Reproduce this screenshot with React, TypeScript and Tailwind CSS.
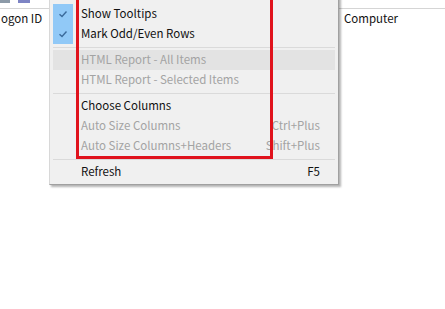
import React from "react";

type Item = {
  label: string;
  checked?: boolean;
  disabled?: boolean;
  active?: boolean;
  shortcut?: string;
};

const groups: Item[][] = [
  [
    { label: "Show Tooltips", checked: true },
    { label: "Mark Odd/Even Rows", checked: true },
  ],
  [
    { label: "HTML Report - All Items", disabled: true, active: true },
    { label: "HTML Report - Selected Items", disabled: true },
  ],
  [
    { label: "Choose Columns" },
    { label: "Auto Size Columns", disabled: true, shortcut: "Ctrl+Plus" },
    { label: "Auto Size Columns+Headers", disabled: true, shortcut: "Shift+Plus" },
  ],
  [{ label: "Refresh", shortcut: "F5" }],
];

function Check() {
  return (
    <svg width="10" height="8" viewBox="0 0 10 8" fill="none">
      <path d="M1.5 4.2 L4 6.5 L8.5 1.5" stroke="#3b6b9c" strokeWidth="1.4" />
    </svg>
  );
}

function MenuRow({ item }: { item: Item }) {
  return (
    <div
      className={`flex h-[20px] items-center mx-[3px] ${item.active ? "bg-[#e3e3e3]" : ""}`}
    >
      <div
        className={`flex h-full w-[20px] items-center justify-center ${item.checked ? "bg-[#91c9f7]" : ""}`}
      >
        {item.checked && <Check />}
      </div>
      <span
        className={`ml-[8px] flex-1 pb-[1px] ${item.disabled ? "text-[#a3a3a3]" : "text-[#111111]"}`}
      >
        {item.label}
      </span>
      {item.shortcut && (
        <span
          className={`mr-[15px] pb-[1px] ${item.disabled ? "text-[#a3a3a3]" : "text-[#111111]"}`}
        >
          {item.shortcut}
        </span>
      )}
    </div>
  );
}

export default function App() {
  return (
    <div
      className="relative h-[309px] w-[445px] overflow-hidden bg-white text-[11.5px]"
      style={{ fontFamily: '"Noto Sans CJK SC", "Noto Sans", sans-serif' }}
    >
      {/* list view behind the menu */}
      <div className="flex h-[9px] border-b border-[#d5d5d5]">
        <div className="h-[3px] w-[10px] bg-[#8c9aa8]" />
        <div className="ml-[8px] h-[3px] w-[12px] bg-[#7d84c4]" />
      </div>
      <div className="flex h-[20px] items-center text-[#111111]">
        <span className="ml-[1px]">ogon ID</span>
        <span className="ml-auto w-[101px]">Computer</span>
      </div>

      {/* context menu */}
      <div className="absolute left-[49px] top-[-4px] w-[290px] border border-r-[#a0a0a0] border-b-[#a0a0a0] border-l-[#d8d8d8] border-t-[#d8d8d8] bg-[#f0f0f0] pb-[2px] pt-[7px] shadow-[2px_2px_2px_rgba(0,0,0,0.3)]">
        {groups.map((g, gi) => (
          <div key={gi}>
            {gi > 0 && (
              <div className="mx-[3px] flex h-[6px] items-center">
                <div className="h-px w-full bg-[#dadada]" />
              </div>
            )}
            {g.map((it) => (
              <MenuRow key={it.label} item={it} />
            ))}
          </div>
        ))}
      </div>

      {/* red highlight annotation */}
      <div className="absolute left-[76px] top-[-10px] h-[169px] w-[197px] border-[3px] border-[#e0121c]" />
    </div>
  );
}
